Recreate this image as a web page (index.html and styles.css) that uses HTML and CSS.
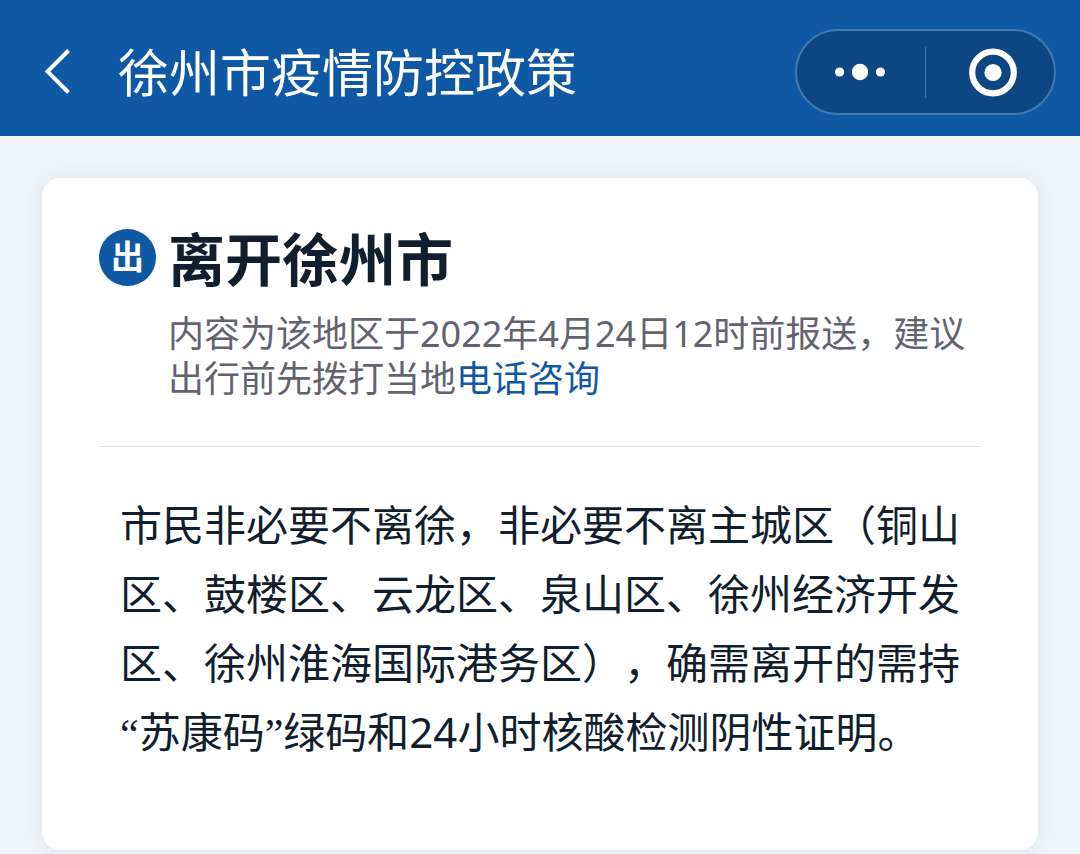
FILE: index.html
```html
<!DOCTYPE html>
<html lang="zh-CN">
<head>
    <meta charset="UTF-8">
    <meta name="viewport" content="width=device-width, initial-scale=1">
    <title>徐州市疫情防控政策</title>
    <link rel="stylesheet" href="styles.css">
</head>
<body>
<header class="navbar">
    <button class="back" type="button" aria-label="返回">
        <svg width="30" height="48" viewBox="0 0 30 48">
            <path d="M26.5 2.5 L5.5 23.5 L26.5 44.5" fill="none" stroke="currentColor" stroke-width="4"/>
        </svg>
    </button>
    <h1 class="title">徐州市疫情防控政策</h1>
    <div class="capsule">
        <button type="button" aria-label="更多">
            <svg width="52" height="52" viewBox="0 0 52 52" fill="currentColor">
                <circle cx="4.6" cy="26" r="4.6"/>
                <circle cx="25" cy="26" r="8.2"/>
                <circle cx="45.5" cy="26" r="4.6"/>
            </svg>
        </button>
        <span class="divider"></span>
        <button type="button" aria-label="关闭">
            <svg width="56" height="52" viewBox="0 0 56 52">
                <circle cx="31" cy="26.5" r="20.8" fill="none" stroke="currentColor" stroke-width="6.2"/>
                <circle cx="31" cy="26.5" r="8.6" fill="currentColor"/>
            </svg>
        </button>
    </div>
</header>
<main class="page">
    <article class="card">
        <div class="card-head">
            <span class="badge">出</span>
            <div>
                <h2>离开徐州市</h2>
                <p class="meta">内容为该地区于2022年4月24日12时前报送，建议出行前先拨打当地<a href="#">电话咨询</a></p>
            </div>
        </div>
        <p class="policy">市民非必要不离徐，非必要不离主城区（铜山区、鼓楼区、云龙区、泉山区、徐州经济开发区、徐州淮海国际港务区），确需离开的需持<span class="quote">“</span>苏康码<span class="quote">”</span>绿码和24小时核酸检测阴性证明。</p>
    </article>
</main>
</body>
</html>
```
FILE: styles.css
```css
* {
    box-sizing: border-box;
}

body {
    margin: 0;
    background-color: #eef4f7;
    color: #101e2e;
    font-family: "Noto Sans", "Noto Sans CJK SC", sans-serif;
    text-spacing-trim: space-all;
}

h1, h2, p {
    margin: 0;
}

button {
    padding: 0;
    border: 0;
    background: none;
    color: inherit;
    cursor: pointer;
}

svg {
    display: block;
}

.navbar {
    display: flex;
    align-items: center;
    height: 136px;
    padding: 8px 24px 0 42px;
    background-color: #0f59a4;
    color: #fff;
}

.back {
    margin-right: 46px;
}

.title {
    flex: 1;
    font-size: 51px;
    font-weight: 400;
    line-height: 64px;
}

.capsule {
    display: flex;
    align-items: center;
    width: 261px;
    height: 86px;
    border: 2px solid #4078b1;
    border-radius: 43px;
    background-color: #0d4681;
}

.capsule button {
    display: flex;
    flex: 1;
    align-items: center;
    justify-content: center;
    height: 100%;
}

.divider {
    width: 1px;
    height: 51px;
    background-color: #4078b1;
}

.page {
    padding: 42px 42px 4px;
}

.card {
    padding: 51px 57px 81px;
    border-radius: 18px;
    background-color: #fff;
    box-shadow: 0 0 20px rgba(16, 30, 46, .07);
}

.card-head {
    display: grid;
    grid-template-columns: 57px 1fr;
    gap: 12px;
    padding-bottom: 45px;
    border-bottom: 1px solid #dfe1e3;
}

.badge {
    width: 57px;
    height: 57px;
    border-radius: 50%;
    background-color: #0f59a4;
    color: #fff;
    font-size: 33px;
    font-weight: 700;
    line-height: 56px;
    text-align: center;
}

.card h2 {
    font-size: 57px;
    font-weight: 700;
    line-height: 60px;
}

.meta {
    margin-top: 22px;
    color: #62636e;
    font-size: 36px;
    line-height: 45px;
}

.meta a {
    color: #0f59a4;
    text-decoration: none;
}

.policy {
    padding: 43px 21px 0;
    font-size: 42px;
    line-height: 69px;
}

/* narrow curly quotes instead of the full-width ones */
.quote {
    font-family: "Liberation Serif", serif;
}
```
